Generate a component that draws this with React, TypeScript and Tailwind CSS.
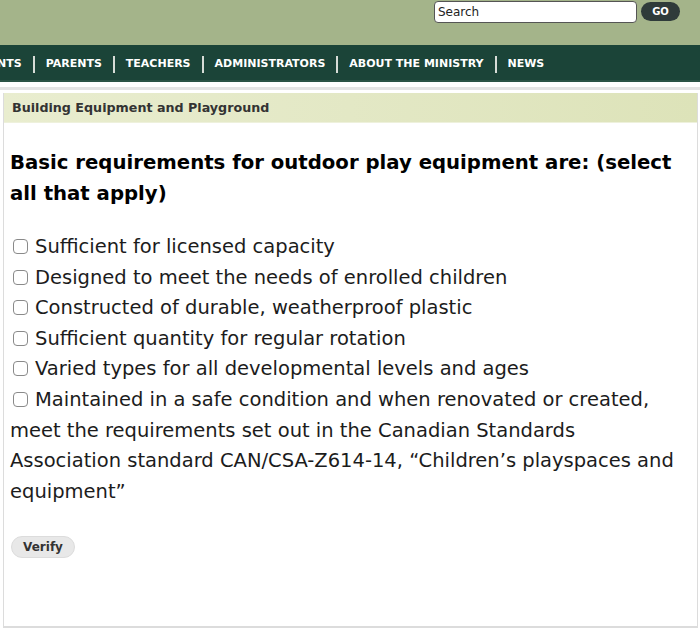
import { useState } from "react";

const navItems = ["STUDENTS", "PARENTS", "TEACHERS", "ADMINISTRATORS", "ABOUT THE MINISTRY", "NEWS"];

const options = [
  "Sufficient for licensed capacity",
  "Designed to meet the needs of enrolled children",
  "Constructed of durable, weatherproof plastic",
  "Sufficient quantity for regular rotation",
  "Varied types for all developmental levels and ages",
  "Maintained in a safe condition and when renovated or created, meet the requirements set out in the Canadian Standards Association standard CAN/CSA-Z614-14, \u201cChildren\u2019s playspaces and equipment\u201d",
];

export default function App() {
  const [checked, setChecked] = useState<boolean[]>(options.map(() => false));

  const toggle = (i: number) => {
    setChecked(checked.map((c, idx) => (idx === i ? !c : c)));
  };

  return (
    <div className="w-[700px] h-[641px] overflow-hidden bg-white font-['DejaVu_Sans',sans-serif]">
      {/* top band with search */}
      <div className="h-[45px] bg-[#a4b48a] flex items-start justify-end pr-[20px] pt-[1px] gap-[4px]">
        <input
          type="text"
          placeholder="Search"
          className="w-[203px] h-[22px] bg-white border border-[#555] rounded-[4px] px-[3px] text-[12px] text-[#222] placeholder:text-[#222] outline-none"
        />
        <button className="w-[39px] h-[19px] mt-[1px] rounded-full bg-[#2f3b3a] text-white text-[10px] font-bold">
          GO
        </button>
      </div>

      {/* main nav */}
      <nav className="h-[37px] pt-[3px] bg-[#1b4438] border-b-[2px] border-[#2b5346] overflow-hidden flex items-center">
        <ul className="flex items-center -ml-[44px] whitespace-nowrap">
          {navItems.map((item, i) => (
            <li key={item} className="flex items-center">
              {i > 0 && <span className="w-[2px] h-[17px] bg-[#d6dcd6] ml-[11px] mr-[11px]" />}
              <span className="text-white text-[11px] font-bold">{item}</span>
            </li>
          ))}
        </ul>
      </nav>

      <div className="h-[8px] bg-white border-b-[3px] border-[#e4e4e4]" />

      {/* content panel */}
      <div className="ml-[3px] mr-[2px] mt-[3px] h-[535px] border-l border-r border-b-[2px] border-[#dcdcdc]">
        <div className="h-[30px] bg-gradient-to-r from-[#e9edcf] via-[#e3e8c5] to-[#dde3b9] flex items-center px-[8px] border-b border-[#eef1dc]">
          <h2 className="text-[12.7px] font-bold text-[#333]">Building Equipment and Playground</h2>
        </div>

        <div className="px-[6px] pt-[24px]">
          <h1 className="text-[19.7px] font-bold leading-[31px] text-black">
            Basic requirements for outdoor play equipment are: (select all that apply)
          </h1>

          <div className="mt-[23px] text-[19.5px] leading-[30.6px] text-[#1c1c1c]">
            {options.map((opt, i) => (
              <div key={i}>
                <label className="cursor-pointer">
                  <input
                    type="checkbox"
                    checked={checked[i]}
                    onChange={() => toggle(i)}
                    className="appearance-none inline-block w-[15px] h-[15px] border border-[#8a8a8a] rounded-[4px] bg-white ml-[3px] mr-[7px] align-[-1px] checked:bg-[#1b4438]"
                  />
                  {opt}
                </label>
              </div>
            ))}
          </div>

          <button className="mt-[29px] ml-[1px] w-[64px] h-[22px] rounded-full bg-[#e8e8e8] border border-[#dcdcdc] text-[12px] font-bold text-[#333]">
            Verify
          </button>
        </div>
      </div>
    </div>
  );
}
